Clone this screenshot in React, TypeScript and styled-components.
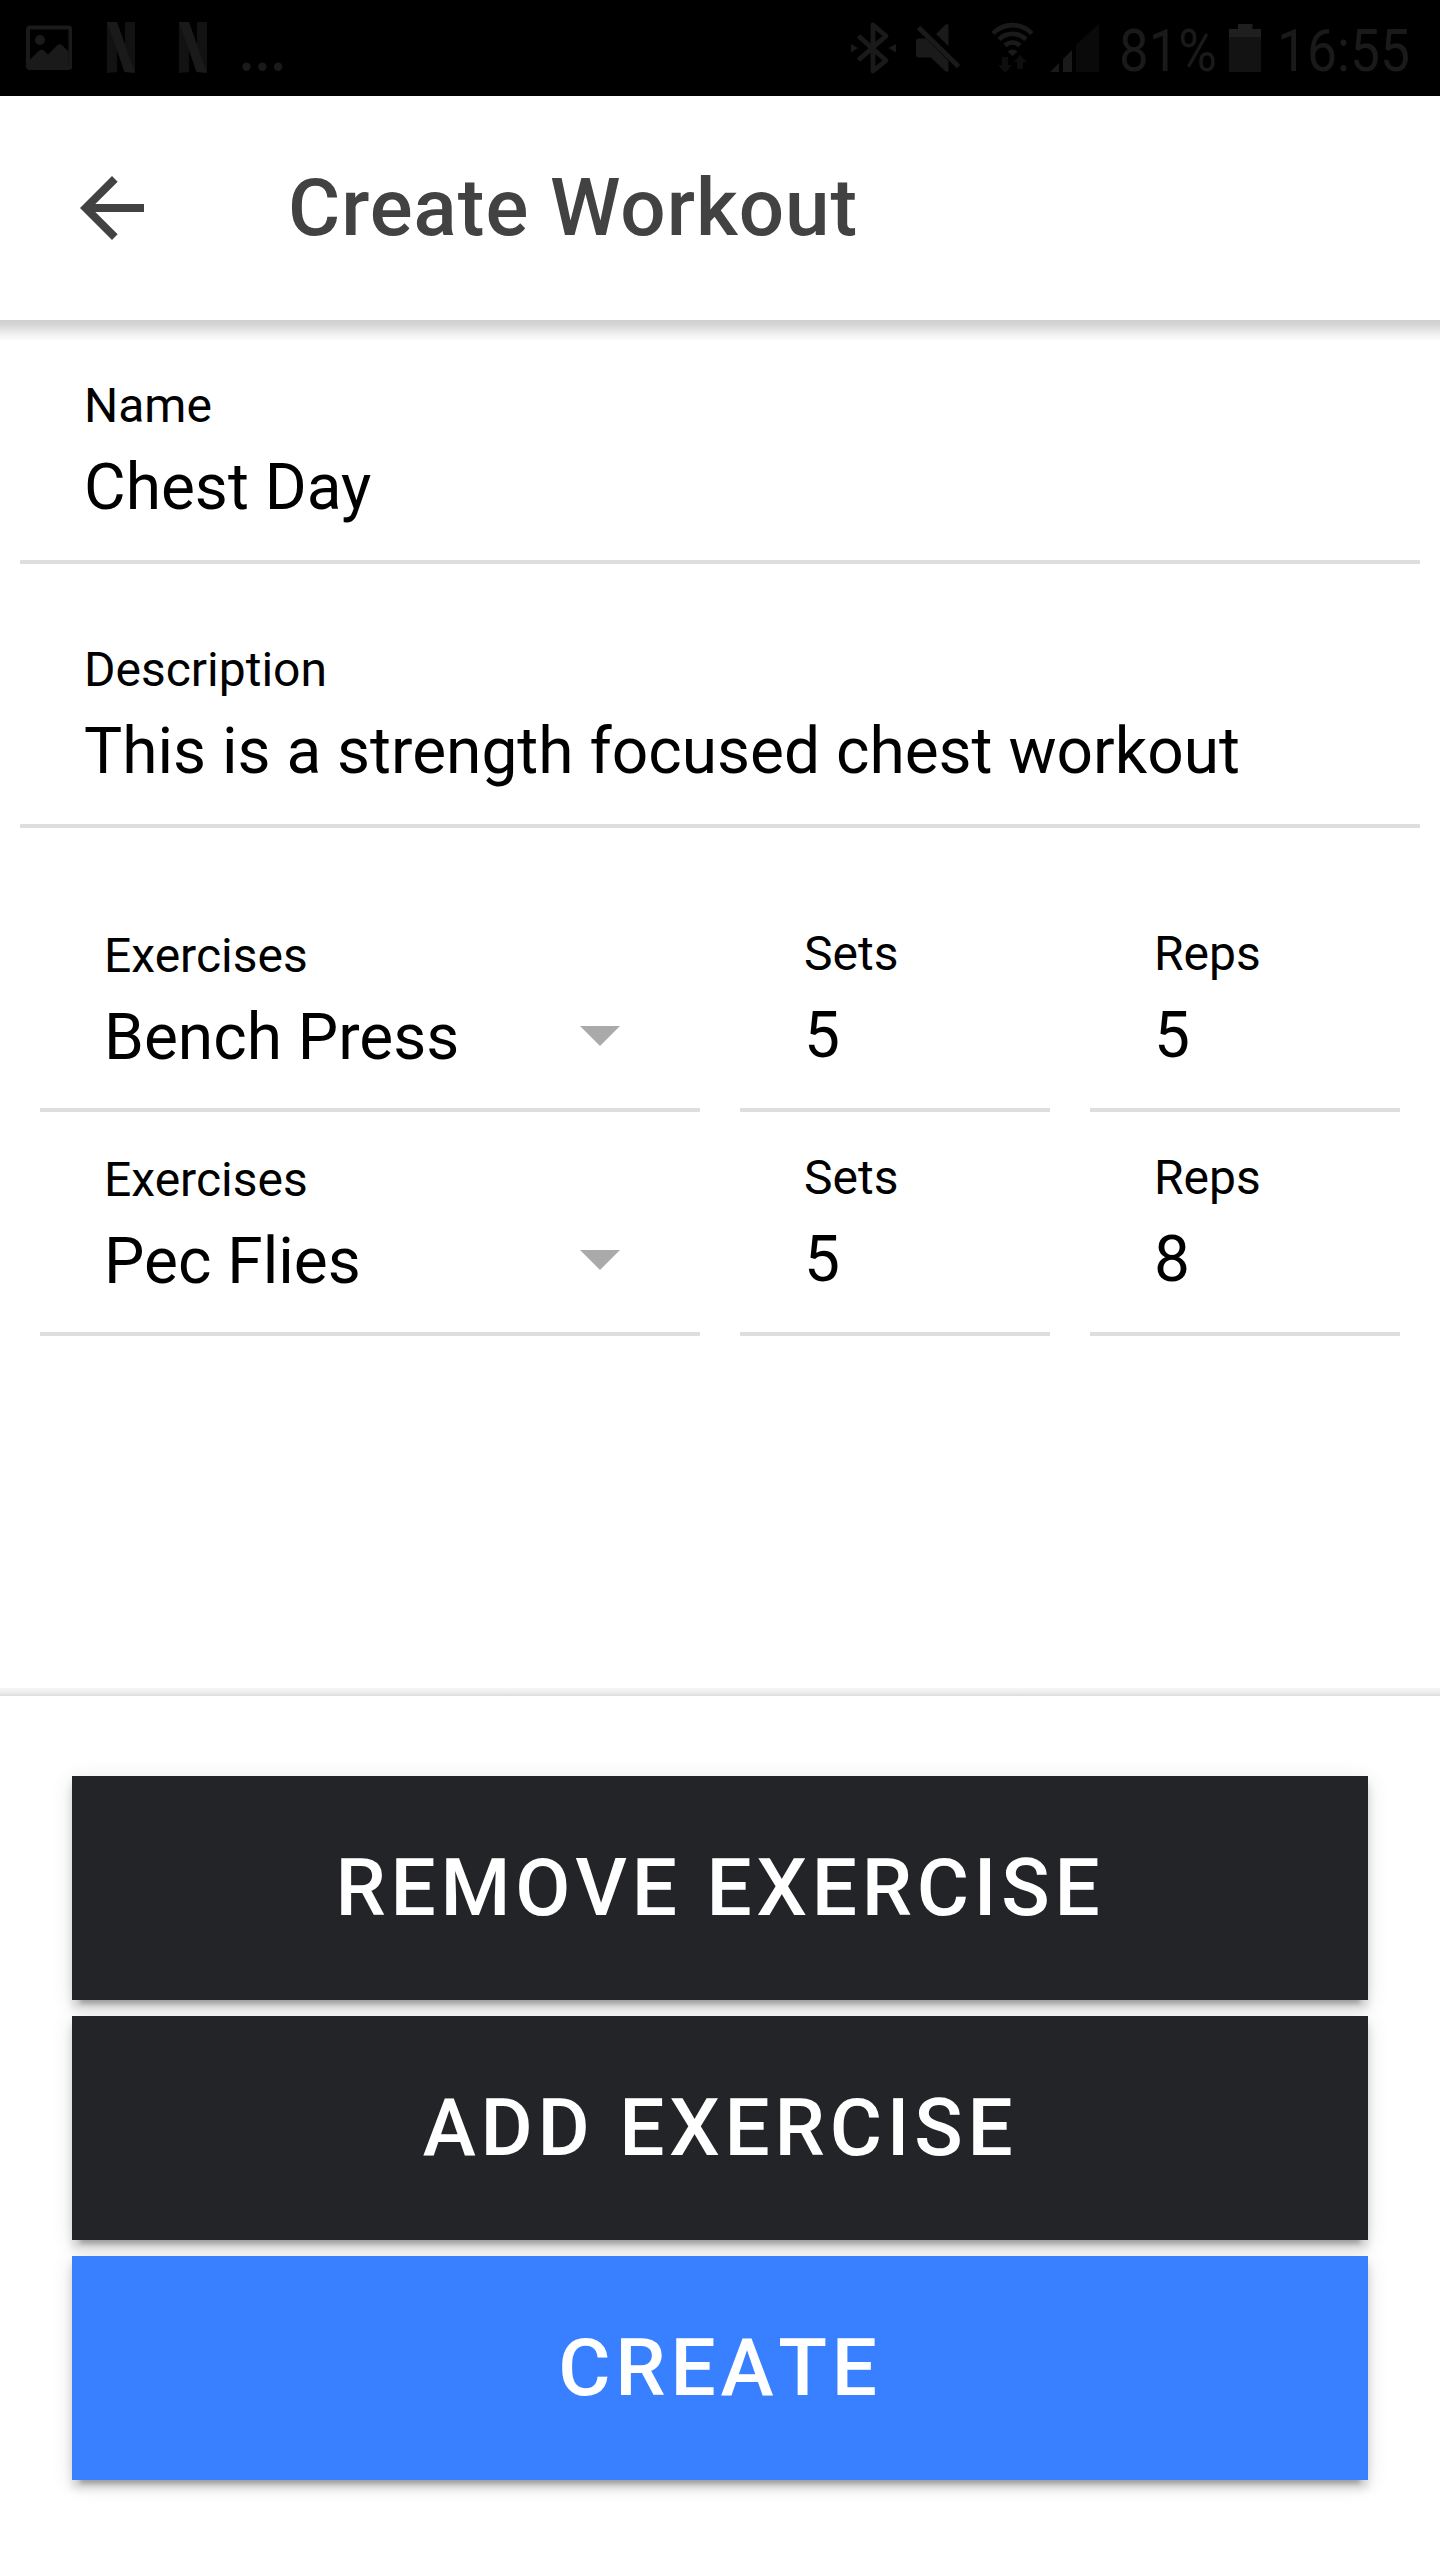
import React from "react";
import styled, { createGlobalStyle } from "styled-components";

const GlobalStyle = createGlobalStyle`
  *, *::before, *::after { box-sizing: border-box; }
  html, body { margin: 0; padding: 0; background: #fff; }
  body { font-family: Roboto, "Liberation Sans", sans-serif; color: #000; }
`;

const Screen = styled.div`
  display: flex;
  flex-direction: column;
  width: 1440px;
  height: 2560px;
  background: #fff;
  overflow: hidden;
`;

const StatusBar = styled.div`
  display: flex;
  justify-content: space-between;
  height: 96px;
  flex: none;
  background: #000;
  color: #1a1a1a;
`;

const StatusGroup = styled.div`
  display: flex;
  align-items: flex-start;
`;

const StatusIcon = styled.svg<{ $gap?: number }>`
  display: block;
  flex: none;
  height: 96px;
  margin-left: ${(p) => p.$gap ?? 0}px;
`;

const StatusText = styled.span<{ $width: number; $gap: number; $stretch?: number }>`
  display: block;
  width: ${(p) => p.$width}px;
  margin-left: ${(p) => p.$gap}px;
  padding-top: 15px;
  font-size: 60px;
  line-height: 71px;
  white-space: nowrap;
  transform: scaleX(${(p) => p.$stretch ?? 1});
  transform-origin: 0 0;
`;

const Header = styled.header`
  display: flex;
  align-items: center;
  flex: none;
  height: 224px;
  padding-left: 64px;
  color: #424242;
`;

const BackButton = styled.button`
  display: flex;
  width: 96px;
  height: 96px;
  padding: 0;
  border: 0;
  background: none;
  color: inherit;
`;

const Title = styled.h1`
  margin: 0 0 0 128px;
  font-size: 80px;
  font-weight: 500;
  letter-spacing: 1px;
  line-height: 96px;
  white-space: nowrap;
`;

const HeaderShadow = styled.div`
  flex: none;
  height: 20px;
  background: linear-gradient(#cfcfcf, #d4d4d4 20%, #e4e4e4 50%, #f5f5f5 80%, #fbfbfb);
`;

const Form = styled.main`
  display: flex;
  flex-direction: column;
  flex: 1;
  padding: 0 20px;
`;

const Field = styled.label<{ $height: number; $top: number }>`
  display: flex;
  flex-direction: column;
  height: ${(p) => p.$height}px;
  padding: ${(p) => p.$top}px 64px 0;
  border-bottom: 4px solid #dedede;
`;

const Label = styled.span`
  font-size: 48px;
  line-height: 56px;
  white-space: nowrap;
`;

const ValueRow = styled.span`
  display: flex;
  align-items: center;
  justify-content: space-between;
  margin-top: 16px;
  padding-right: 16px;
  font-size: 64px;
  line-height: 76px;
  white-space: nowrap;
`;

const Caret = styled.span`
  margin-bottom: 4px;
  border: 20px solid transparent;
  border-top-color: #aaa;
  border-bottom-width: 0;
`;

const ExerciseList = styled.section`
  padding: 60px 20px 0;
`;

const ExerciseRow = styled.div`
  display: grid;
  grid-template-columns: 660px 310px 310px;
  column-gap: 40px;
`;

const Footer = styled.footer`
  display: flex;
  flex-direction: column;
  gap: 16px;
  flex: none;
  height: 864px;
  padding: 80px 72px 0;
`;

const FooterShadow = styled.div`
  flex: none;
  height: 8px;
  background: linear-gradient(#f6f6f6, #ebebeb 60%, #dcdcdc);
`;

const ActionButton = styled.button<{ $primary?: boolean }>`
  height: 224px;
  padding: 0;
  border: 0;
  background: ${(p) => (p.$primary ? "#3880ff" : "#222428")};
  color: #fff;
  font: 500 80px/96px Roboto, "Liberation Sans", sans-serif;
  font-kerning: none;
  letter-spacing: 4.8px;
  text-transform: uppercase;
  box-shadow: 0 12px 4px -8px rgba(0, 0, 0, 0.2), 0 8px 8px 0 rgba(0, 0, 0, 0.14),
    0 4px 20px 0 rgba(0, 0, 0, 0.12);
`;

const exercises = [
  { name: "Bench Press", sets: 5, reps: 5 },
  { name: "Pec Flies", sets: 5, reps: 8 },
];

const PictureIcon = () => (
  <StatusIcon $gap={26} width="46" viewBox="26 0 46 96">
    <rect x="28" y="27.500" width="42.500" height="40.500" rx="2" fill="none" stroke="#1a1a1a" strokeWidth="4" />
    <circle cx="40" cy="40" r="5" fill="#1a1a1a" />
    <path d="M30 59.500L39 50.800Q41.500 48.500 44 50.800L48 54.500L57 45.500Q59.700 43 62.300 45.500L68.500 51.500V67H30Z" fill="#1a1a1a" />
  </StatusIcon>
);

const StreamingIcon = ({ gap }: { gap: number }) => (
  <StatusIcon $gap={gap} width="28" viewBox="0 0 28 96">
    <path d="M0 22H10V72L0 73ZM18 22H28V73L18 60Z" fill="#121212" />
    <path d="M0 22H10L28 73L17.500 72Z" fill="#1a1a1a" />
  </StatusIcon>
);

const MoreIcon = () => (
  <StatusIcon $gap={35} width="42" viewBox="242 0 42 96" fill="#1a1a1a">
    <circle cx="246.500" cy="66.700" r="4.200" />
    <circle cx="262.300" cy="66.700" r="4.200" />
    <circle cx="278.100" cy="66.700" r="4.200" />
  </StatusIcon>
);

const BluetoothIcon = () => (
  <StatusIcon width="46" viewBox="850 0 46 96">
    <path d="M858.500 36L886 60.500L873 71V25L886 36L858.500 60" fill="none" stroke="#1a1a1a" strokeWidth="4.800" strokeLinejoin="round" />
    <path d="M851 44L858 48L851 52.500ZM896 44L888.500 48L896 52.500Z" fill="#1a1a1a" />
  </StatusIcon>
);

const MutedIcon = () => (
  <StatusIcon $gap={19} width="46" viewBox="915 0 46 96">
    <path d="M919 38.500H926L948.500 61V70Q948.500 73 945 71L931 57.500H919Q916 57.500 916 54.500V41.500Q916 38.500 919 38.500ZM936 34L945 25Q948.500 22.500 948.500 26V46Z" fill="#1a1a1a" />
    <path d="M918.500 27.500L958.500 66.500" stroke="#1a1a1a" strokeWidth="5" />
  </StatusIcon>
);

const WifiIcon = () => (
  <StatusIcon $gap={30} width="44" viewBox="991 0 44 96">
    <path d="M993 33.500A27 27 0 0 1 1032 33.500M999 39.500A19 19 0 0 1 1026 39.500M1005 45.500A11 11 0 0 1 1020 45.500" fill="none" stroke="#1a1a1a" strokeWidth="4.600" />
    <path d="M1012.500 56L1007.500 51.500Q1012.500 47.500 1017.500 51.500Z" fill="#1a1a1a" />
    <path d="M1002 57H1008V65H1012L1005 73L998 65H1002ZM1017 69H1023V62H1027L1020 55L1014 62H1017Z" fill="#0e0e0e" />
  </StatusIcon>
);

const SignalIcon = () => (
  <StatusIcon $gap={14} width="50" viewBox="1049 0 50 96">
    <path d="M1050 72L1059 63V72ZM1063 59L1072 50V72H1063Z" fill="#1a1a1a" />
    <path d="M1076 45L1099 23.500V72H1076Z" fill="#0a0a0a" />
  </StatusIcon>
);

const BatteryIcon = () => (
  <StatusIcon width="32" viewBox="1229 0 32 96">
    <path d="M1229 29H1238V24H1252.500V29H1261V37H1229Z" fill="#1f1f1f" />
    <path d="M1229 37H1261V72H1229Z" fill="#131313" />
  </StatusIcon>
);

interface InputProps {
  label: string;
  value: string | number;
  height?: number;
  top?: number;
  select?: boolean;
}

const Input = ({ label, value, height = 224, top = 38, select }: InputProps) => (
  <Field $height={height} $top={top}>
    <Label>{label}</Label>
    <ValueRow>
      {value}
      {select && <Caret />}
    </ValueRow>
  </Field>
);

export default function App() {
  return (
    <Screen>
      <GlobalStyle />
      <StatusBar>
        <StatusGroup>
          <PictureIcon />
          <StreamingIcon gap={35} />
          <StreamingIcon gap={44} />
          <MoreIcon />
        </StatusGroup>
        <StatusGroup>
          <BluetoothIcon />
          <MutedIcon />
          <WifiIcon />
          <SignalIcon />
          <StatusText $width={110} $gap={20} $stretch={0.88}>81%</StatusText>
          <BatteryIcon />
          <StatusText $width={163} $gap={16} $stretch={0.89}>16:55</StatusText>
        </StatusGroup>
      </StatusBar>
      <Header>
        <BackButton aria-label="Back">
          <svg width="96" height="96" viewBox="0 0 24 24" fill="currentColor">
            <path d="M20 11H7.830l5.590-5.590L12 4l-8 8 8 8 1.410-1.410L7.830 13H20v-2z" />
          </svg>
        </BackButton>
        <Title>Create Workout</Title>
      </Header>
      <HeaderShadow />
      <Form>
        <Input label="Name" value="Chest Day" />
        <Input label="Description" value="This is a strength focused chest workout" height={264} top={78} />
        <ExerciseList>
          {exercises.map((exercise) => (
            <ExerciseRow key={exercise.name}>
              <Input label="Exercises" value={exercise.name} top={40} select />
              <Input label="Sets" value={exercise.sets} />
              <Input label="Reps" value={exercise.reps} />
            </ExerciseRow>
          ))}
        </ExerciseList>
      </Form>
      <FooterShadow />
      <Footer>
        <ActionButton>Remove Exercise</ActionButton>
        <ActionButton>Add Exercise</ActionButton>
        <ActionButton $primary>Create</ActionButton>
      </Footer>
    </Screen>
  );
}
